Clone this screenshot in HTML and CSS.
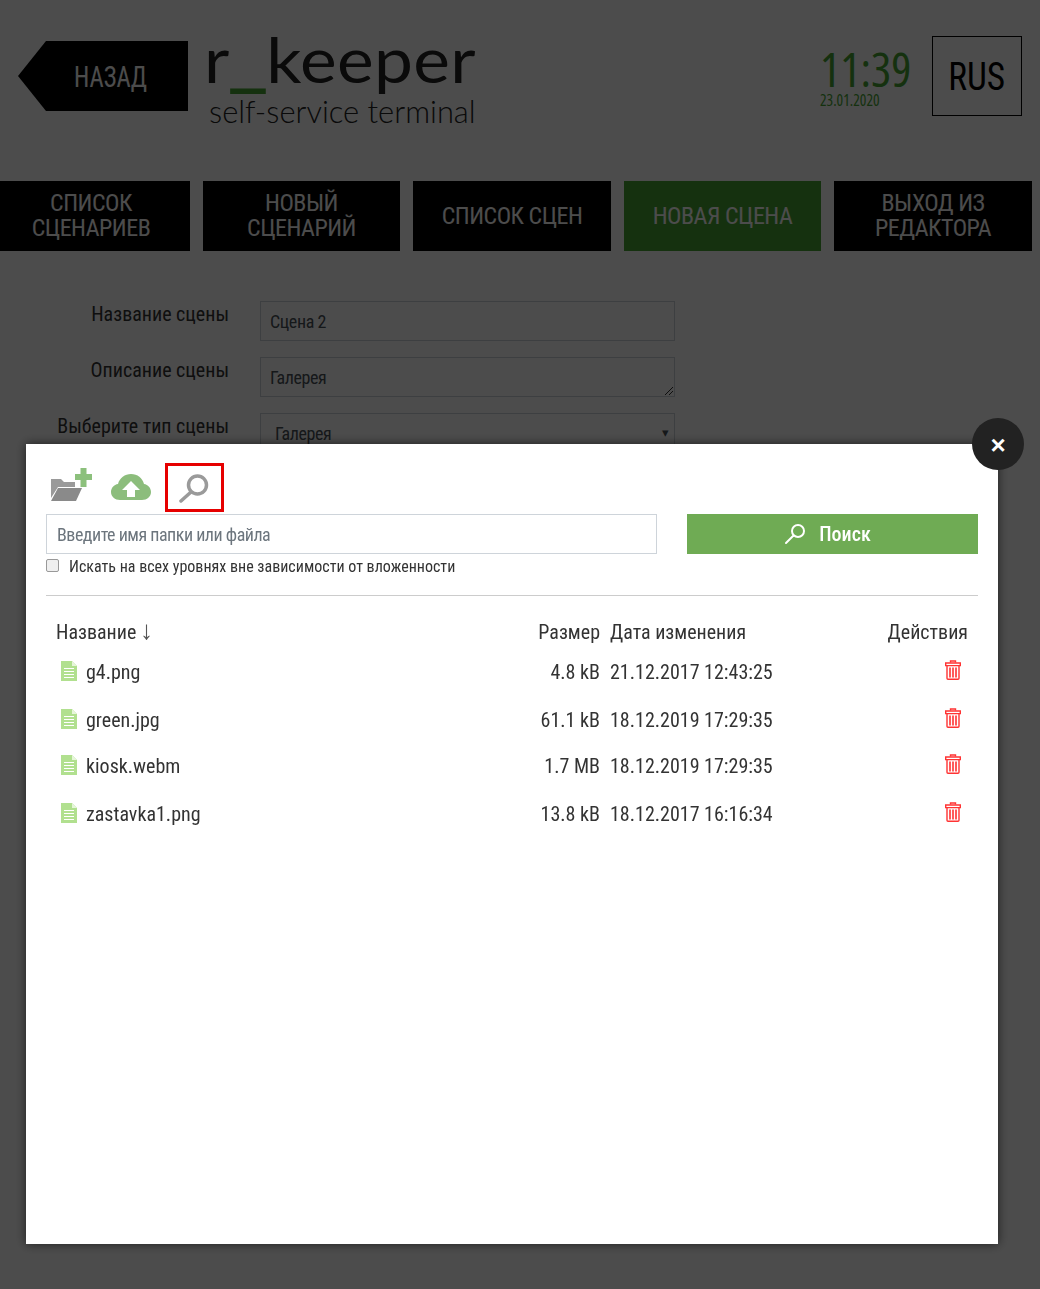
FILE: index.html
```html
<!DOCTYPE html>
<html lang="ru">
<head>
<meta charset="utf-8">
<title>r_keeper</title>
<link rel="stylesheet" href="styles.css">
</head>
<body>
<div class="page">
  <header class="top">
    <a class="back"><span class="back-text">НАЗАД</span></a>
    <div class="logo">
      <div class="logo-main">r<span class="logo-us">_</span>keeper</div>
      <div class="logo-sub">self-service terminal</div>
    </div>
    <div class="clock">
      <div class="time">11:39</div>
      <div class="date">23.01.2020</div>
    </div>
    <div class="lang"><span class="lang-text">RUS</span></div>
  </header>
  <nav class="nav">
    <a class="nav-btn first">СПИСОК<br>СЦЕНАРИЕВ</a>
    <a class="nav-btn">НОВЫЙ<br>СЦЕНАРИЙ</a>
    <a class="nav-btn">СПИСОК СЦЕН</a>
    <a class="nav-btn active">НОВАЯ СЦЕНА</a>
    <a class="nav-btn">ВЫХОД ИЗ<br>РЕДАКТОРА</a>
  </nav>
  <form class="scene-form">
    <div class="form-row"><label class="form-label">Название сцены</label><div class="field">Сцена 2</div></div>
    <div class="form-row"><label class="form-label">Описание сцены</label><div class="field">Галерея
      <svg class="grip" width="10" height="10" viewBox="0 0 10 10"><path d="M1 9 9 1M5 9 9 5" stroke="#333" fill="none"/></svg></div></div>
    <div class="form-row"><label class="form-label">Выберите тип сцены</label><div class="field select">Галерея<span class="caret">▾</span></div></div>
  </form>
</div>

<div class="overlay"></div>

<section class="modal">
  <div class="toolbar">
    <button class="tool" type="button" aria-label="Новая папка">
      <svg width="46" height="38" viewBox="0 0 46 38">
        <path fill="#9a9a9a" d="M5 11h10l3 3h11v5H12L5 30Z"/>
        <path fill="#8a8a8a" d="M12 20h24l-6 13H5Z"/>
        <path fill="#8cc07c" d="M34.500 0h6v6H46v6h-5.500v7h-6v-7H29V6h5.500Z"/>
      </svg>
    </button>
    <button class="tool" type="button" aria-label="Загрузить">
      <svg width="40" height="28" viewBox="0 0 40 28">
        <path fill="#8cbd7c" d="M9 27C4 27 0 23.500 0 19c0-4 3-7.500 7-8C8.500 5 14 1 20 1c6.500 0 11.500 4 13 10 4 .5 7 4 7 8 0 4.500-4 8-9 8Z"/>
        <path fill="#fff" d="M20 8l9 9h-5v7h-8v-7h-5Z"/>
      </svg>
    </button>
    <button class="tool tool-active" type="button" aria-label="Поиск">
      <svg width="32" height="32" viewBox="0 0 32 32">
        <circle cx="18.500" cy="14" r="9" fill="none" stroke="#9a9a9a" stroke-width="3.500"/>
        <path d="M12 21 2 30" stroke="#9a9a9a" stroke-width="3.500" stroke-linecap="round"/>
      </svg>
    </button>
  </div>
  <div class="search-row">
    <div class="search-input">Введите имя папки или файла</div>
    <button class="search-btn" type="button">
      <svg width="22" height="22" viewBox="0 0 22 22">
        <circle cx="14" cy="8" r="6" fill="none" stroke="#fff" stroke-width="2"/>
        <path d="M9.500 12.500 2 20" stroke="#fff" stroke-width="2" stroke-linecap="round"/>
      </svg>
      <span>Поиск</span>
    </button>
  </div>
  <label class="check-row"><span class="check"></span><span>Искать на всех уровнях вне зависимости от вложенности</span></label>
  <hr class="divider">
  <div class="table">
    <div class="thead">
      <div class="c-name">Название <span class="arrow">↓</span></div>
      <div class="c-size">Размер</div>
      <div class="c-date">Дата изменения</div>
      <div class="c-act">Действия</div>
    </div>
    <div class="trow r1">
      <div class="c-name"><svg class="file" width="16" height="20" viewBox="0 0 16 20"><use href="#file-i"/></svg>g4.png</div>
      <div class="c-size">4.8 kB</div><div class="c-date">21.12.2017 12:43:25</div>
      <div class="c-act"><svg class="trash" width="16" height="20" viewBox="0 0 16 20"><use href="#trash-i"/></svg></div>
    </div>
    <div class="trow r2">
      <div class="c-name"><svg class="file" width="16" height="20" viewBox="0 0 16 20"><use href="#file-i"/></svg>green.jpg</div>
      <div class="c-size">61.1 kB</div><div class="c-date">18.12.2019 17:29:35</div>
      <div class="c-act"><svg class="trash" width="16" height="20" viewBox="0 0 16 20"><use href="#trash-i"/></svg></div>
    </div>
    <div class="trow r3">
      <div class="c-name"><svg class="file" width="16" height="20" viewBox="0 0 16 20"><use href="#file-i"/></svg>kiosk.webm</div>
      <div class="c-size">1.7 MB</div><div class="c-date">18.12.2019 17:29:35</div>
      <div class="c-act"><svg class="trash" width="16" height="20" viewBox="0 0 16 20"><use href="#trash-i"/></svg></div>
    </div>
    <div class="trow r4">
      <div class="c-name"><svg class="file" width="16" height="20" viewBox="0 0 16 20"><use href="#file-i"/></svg>zastavka1.png</div>
      <div class="c-size">13.8 kB</div><div class="c-date">18.12.2017 16:16:34</div>
      <div class="c-act"><svg class="trash" width="16" height="20" viewBox="0 0 16 20"><use href="#trash-i"/></svg></div>
    </div>
  </div>
</section>
<button class="close" type="button" aria-label="Закрыть">×</button>

<svg class="defs" width="0" height="0">
  <symbol id="file-i" viewBox="0 0 16 20">
    <path fill="#b1e08f" d="M0 0h11l5 5v15H0Z"/>
    <path fill="#e6f6da" d="M11 0l5 5h-5Z"/>
    <path stroke="#fff" d="M3 7.500h10M3 10.500h10M3 13.500h10M3 16.500h10"/>
  </symbol>
  <symbol id="trash-i" viewBox="0 0 16 20">
    <g fill="none" stroke="#f33" stroke-width="1.400">
      <path d="M5.500 2.500V1h5v1.500"/>
      <path d="M.7 3h14.600v2.600H.7Z"/>
      <path d="M2 6v12.300c0 .6.400 1 1 1h10c.6 0 1-.4 1-1V6"/>
      <path d="M5 7.500v10M8 7.500v10M11 7.500v10" stroke-width="1.600"/>
    </g>
  </symbol>
</svg>
</body>
</html>
```
FILE: styles.css
```css
* { box-sizing: border-box; }
html, body { margin: 0; height: 100%; overflow: hidden; background: #fff; }
body { font-family: "Roboto", "Liberation Sans", sans-serif; font-stretch: 75%; color: #333; }
.defs { position: absolute; }

.page { height: 1289px; }
.top { display: flex; height: 181px; padding: 36px 18px 0; align-items: flex-start; }
.back {
  width: 170px; height: 70px; margin-top: 5px; background: #000; color: #fff; font-size: 30px;
  clip-path: polygon(28px 0, 100% 0, 100% 100%, 28px 100%, 0 50%);
  display: flex; align-items: center; justify-content: center; padding-left: 15px;
}
.back-text { display: inline-block; transform: scaleX(.82); }
.logo { margin-left: 18px; font-family: "Lato", sans-serif; font-stretch: normal; }
.logo-main { font-size: 62px; line-height: 46px; letter-spacing: .3px; height: 61px; margin-left: -2px; color: #222; transform: scaleX(1.12); transform-origin: left center; white-space: nowrap; }
.logo-us { color: #46a632; display: inline-block; margin: 0 2px; transform: translateY(-14px) scale(1.3, 1.5); }
.logo-sub { font-size: 30.900px; line-height: 30px; font-weight: 300; margin-left: 3px; color: #222; }
.clock { margin-left: auto; margin-top: 10px; width: 92px; color: #46a632; }
.time { font-size: 47.500px; line-height: 46px; font-family: "Open Sans", sans-serif; }
.date { font-size: 15.500px; line-height: 15px; margin-top: 1px; font-family: "Open Sans", sans-serif; }
.lang { width: 90px; height: 80px; margin-left: 20px; border: 1px solid #000; color: #000; font-size: 38px; display: flex; align-items: center; justify-content: center; padding-top: 2px; }
.lang-text { display: inline-block; transform: scaleX(.93); }

.nav { display: grid; grid-template-columns: 190px 197px 198px 197px 198px; column-gap: 13px; }
.nav-btn { height: 70px; background: #000; color: #fff; font-size: 24px; letter-spacing: -.5px; line-height: 25px; text-align: center; display: flex; align-items: center; justify-content: center; }
.nav-btn.first { padding-right: 8px; }
.nav-btn.active { background: #46a632; }

.scene-form { margin-top: 50px; display: flex; flex-direction: column; gap: 16px; }
.form-row { display: flex; align-items: flex-start; }
.form-label { width: 229px; text-align: right; font-size: 20px; line-height: 26px; color: #333; }
.field { position: relative; width: 415px; height: 40px; margin-left: 31px; padding: 9px 9px; border: 1px solid #ced4da; color: #495057; font-size: 18px; letter-spacing: -.4px; line-height: 22px; }
.select { padding-left: 14px; }
.grip { position: absolute; right: 0; bottom: 0; }
.caret { position: absolute; right: 5px; top: 8px; font-size: 13px; }

.overlay { position: fixed; inset: 0; background: rgba(0,0,0,.7); }
.modal { position: fixed; left: 26px; top: 444px; width: 972px; height: 800px; background: #fff; box-shadow: 0 0 10px rgba(0,0,0,.6); padding: 19px 20px 0; }
.close { position: fixed; left: 972px; top: 418px; width: 52px; height: 52px; border-radius: 50%; border: 0; padding: 3px 0 0; background: #222; color: #fff; font: bold 26px/49px "Liberation Sans", sans-serif; }

.toolbar { display: flex; align-items: center; height: 48px; }
.tool { border: 0; background: none; padding: 0; display: flex; align-items: center; justify-content: center; }
.tool:nth-child(1) { width: 46px; }
.tool:nth-child(2) { width: 40px; margin-left: 19px; }
.tool-active { width: 59px; height: 49px; margin-left: 14px; border: 3px solid #e60000; }
.search-row { display: flex; justify-content: space-between; margin-top: 3px; }
.search-input { width: 611px; height: 40px; border: 1px solid #ced4da; padding: 0 10px; color: #6c757d; font-size: 18px; letter-spacing: -.5px; line-height: 40px; }
.search-btn { width: 291px; height: 40px; border: 0; background: #6fab54; color: #fff; font: inherit; font-size: 20px; font-weight: 500; display: flex; align-items: center; justify-content: center; gap: 13px; padding: 0 10px 0 0; }
.check-row { display: flex; align-items: center; margin-top: 2px; height: 20px; font-size: 16px; color: #333; }
.check { width: 13px; height: 13px; margin: -2px 10px 0 0; border: 1px solid #999; border-radius: 2px; background: #efefef; }
.divider { margin: 19px 0 0; border: 0; border-top: 1px solid #ccc; }

.table { margin-top: 22px; font-size: 20px; color: #333; }
.thead, .trow { display: grid; grid-template-columns: 472px 82px 1fr 120px; }
.thead { height: 28px; line-height: 28px; }
.thead > div, .trow > div { padding: 0 10px; }
.thead > .c-size, .trow > .c-size { text-align: right; white-space: nowrap; padding-right: 0; }
.c-act { text-align: right; }
.arrow { font: 26px/1px "Liberation Sans", sans-serif; color: #555; margin-left: -1px; }
.trow { line-height: 28px; height: 28px; margin-top: 20px; }
.r1 { margin-top: 12px; }
.r3 { margin-top: 18px; }
.c-name { display: flex; align-items: center; }
.thead .c-name { display: block; }
.trow .c-name { padding-left: 15px; }
.trow .c-act { display: flex; justify-content: flex-end; align-items: center; }
.file { margin-right: 9px; margin-top: -2px; }
.trash { margin-right: 7px; margin-top: -4px; }
```
